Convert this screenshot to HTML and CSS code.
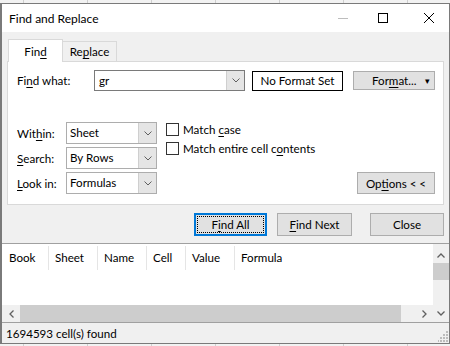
FILE: index.html
```html
<!DOCTYPE html>
<html lang="en">
<head>
  <meta charset="UTF-8" />
  <title>Find and Replace</title>
  <link rel="stylesheet" href="styles.css">
</head>
<body>
  <div class="window">
    <div class="titlebar">
      <span class="title">Find and Replace</span>
      <div class="controls">
        <svg class="ctl-min" width="10" height="10" viewBox="0 0 10 10"><path d="M0 5.5h10" stroke="#bdbdbd" stroke-width="1"/></svg>
        <svg class="ctl-max" width="10" height="10" viewBox="0 0 10 10"><rect x="0.5" y="0.5" width="9" height="9" fill="none" stroke="#000" stroke-width="1"/></svg>
        <svg class="ctl-close" width="10" height="10" viewBox="0 0 10 10"><path d="M0 0L10 10M10 0L0 10" stroke="#000" stroke-width="1"/></svg>
      </div>
    </div>

    <div class="dialog">
      <div class="tabs">
        <div class="tab active">Fin<u>d</u></div>
        <div class="tab">Re<u>p</u>lace</div>
      </div>
      <div class="panel">
        <div class="find-row">
          <span class="find-label">Fi<u>n</u>d what:</span>
          <div class="combo">
            <span class="combo-text">gr</span>
            <span class="combo-arrow"><svg width="8" height="5" viewBox="0 0 8 5"><path d="M0.5 0.5L4 4L7.5 0.5" fill="none" stroke="#606060" stroke-width="1"/></svg></span>
          </div>
          <div class="nofmt">No Format Set</div>
          <div class="btn format-btn"><span>For<u>m</u>at...</span><span class="drop">&#9662;</span></div>
        </div>

        <div class="lower">
          <div class="selects">
            <div class="sel-row">
              <span class="sel-label">Wit<u>h</u>in:</span>
              <div class="select"><span class="select-text">Sheet</span><span class="select-arrow"><svg width="8" height="5" viewBox="0 0 8 5"><path d="M0.5 0.5L4 4L7.5 0.5" fill="none" stroke="#606060" stroke-width="1"/></svg></span></div>
            </div>
            <div class="sel-row">
              <span class="sel-label"><u>S</u>earch:</span>
              <div class="select"><span class="select-text">By Rows</span><span class="select-arrow"><svg width="8" height="5" viewBox="0 0 8 5"><path d="M0.5 0.5L4 4L7.5 0.5" fill="none" stroke="#606060" stroke-width="1"/></svg></span></div>
            </div>
            <div class="sel-row">
              <span class="sel-label"><u>L</u>ook in:</span>
              <div class="select"><span class="select-text">Formulas</span><span class="select-arrow"><svg width="8" height="5" viewBox="0 0 8 5"><path d="M0.5 0.5L4 4L7.5 0.5" fill="none" stroke="#606060" stroke-width="1"/></svg></span></div>
            </div>
          </div>
          <div class="checks">
            <label class="check"><span class="box"></span><span>Match <u>c</u>ase</span></label>
            <label class="check"><span class="box"></span><span>Match entire cell c<u>o</u>ntents</span></label>
          </div>
          <div class="btn options-btn"><span>Op<u>t</u>ions &lt; &lt;</span></div>
        </div>
      </div>

      <div class="actions">
        <div class="btn act focus"><span>F<u>i</u>nd All</span></div>
        <div class="btn act next"><span><u>F</u>ind Next</span></div>
        <div class="btn act close">Close</div>
      </div>
    </div>

    <div class="results">
      <div class="list">
        <div class="list-main">
          <div class="list-head">
            <span class="col c-book">Book</span>
            <span class="col c-sheet">Sheet</span>
            <span class="col c-name">Name</span>
            <span class="col c-cell">Cell</span>
            <span class="col c-value">Value</span>
            <span class="col c-formula">Formula</span>
          </div>
          <div class="list-body"></div>
          <div class="hscroll">
            <span class="sb-btn h-left"><svg width="5" height="8" viewBox="0 0 5 8"><path d="M4.5 0.5L1 4L4.5 7.5" fill="none" stroke="#606060" stroke-width="1.3"/></svg></span>
            <span class="h-thumb"></span>
            <span class="sb-fill"></span>
            <span class="sb-btn h-right"><svg width="5" height="8" viewBox="0 0 5 8"><path d="M0.5 0.5L4 4L0.5 7.5" fill="none" stroke="#606060" stroke-width="1.3"/></svg></span>
          </div>
        </div>
        <div class="vscroll">
          <span class="sb-btn v-up"><svg width="8" height="5" viewBox="0 0 8 5"><path d="M0.5 4.5L4 1L7.5 4.5" fill="none" stroke="#606060" stroke-width="1.3"/></svg></span>
          <span class="v-thumb"></span>
          <span class="sb-fill"></span>
          <span class="sb-btn v-down"><svg width="8" height="5" viewBox="0 0 8 5"><path d="M0.5 0.5L4 4L7.5 0.5" fill="none" stroke="#606060" stroke-width="1.3"/></svg></span>
        </div>
      </div>
      <div class="status">
        <span>1694593 cell(s) found</span>
        <svg class="grip" width="11" height="11" viewBox="0 0 11 11">
          <rect x="8" y="0" width="2" height="2" fill="#bcbcbc"/>
          <rect x="5" y="3" width="2" height="2" fill="#bcbcbc"/>
          <rect x="8" y="3" width="2" height="2" fill="#bcbcbc"/>
          <rect x="2" y="6" width="2" height="2" fill="#bcbcbc"/>
          <rect x="5" y="6" width="2" height="2" fill="#bcbcbc"/>
          <rect x="8" y="6" width="2" height="2" fill="#bcbcbc"/>
          <rect x="-1" y="9" width="2" height="2" fill="#bcbcbc"/>
          <rect x="2" y="9" width="2" height="2" fill="#bcbcbc"/>
          <rect x="5" y="9" width="2" height="2" fill="#bcbcbc"/>
          <rect x="8" y="9" width="2" height="2" fill="#bcbcbc"/>
        </svg>
      </div>
    </div>
  </div>
</body>
</html>
```

FILE: styles.css
```css
* {
  box-sizing: border-box;
}
body {
  margin: 0;
  padding-top: 3px;
  height: 346px;
  overflow: hidden;
  font-family: Lato, "Noto Sans", sans-serif;
  font-size: 11.6px;
  color: #000;
  background: #f2f2f2 repeating-linear-gradient(90deg, transparent 0 23px, #cfcfcf 23px 24px, transparent 24px 64px);
}
u {
  text-decoration-thickness: 1px;
  text-underline-offset: 2px;
}
.window {
  width: 450px;
  height: 341px;
  border: 1px solid #7a7a7a;
  border-left-width: 2px;
  background: #f0f0f0;
  display: flex;
  flex-direction: column;
}

/* title bar */
.titlebar {
  flex: none;
  height: 28px;
  background: #fff;
  display: flex;
  align-items: center;
  padding: 0 15px 0 7px;
}
.title {
  font-size: 12px;
}
.controls {
  margin-left: auto;
  display: flex;
  align-items: center;
}
.controls svg {
  display: block;
}
.ctl-max {
  margin-left: 30px;
}
.ctl-close {
  margin-left: 36px;
}

/* dialog */
.dialog {
  flex: none;
  height: 211px;
  padding: 7px 5px 0 5px;
}
.tabs {
  display: flex;
  align-items: flex-end;
  height: 22px;
  padding-left: 1px;
  position: relative;
  z-index: 1;
}
.tab {
  width: 54px;
  height: 20px;
  border: 1px solid #d9d9d9;
  border-left: none;
  border-bottom: none;
  text-align: center;
  padding-top: 2px;
  line-height: 16px;
}
.tab.active {
  width: 55px;
  height: 23px;
  margin-bottom: -1px;
  border-left: 1px solid #d9d9d9;
  background: #fff;
  padding-top: 4px;
}
.panel {
  height: 144px;
  border: 1px solid #d9d9d9;
  background: #fff;
  padding: 8px 8px 0 9px;
}
.find-row {
  display: flex;
  align-items: center;
  height: 21px;
}
.find-label {
  width: 77px;
}
.combo {
  width: 151px;
  height: 21px;
  border: 1px solid #7a7a7a;
  display: flex;
}
.combo-text {
  flex: 1;
  padding-left: 4px;
  line-height: 19px;
}
.combo-arrow,
.select-arrow {
  width: 18px;
  background: #e5e5e5;
  border-left: 1px solid #cfcfcf;
  display: flex;
  align-items: center;
  justify-content: center;
}
.nofmt {
  margin-left: 7px;
  width: 91px;
  height: 20px;
  border: 1px solid #000;
  text-align: center;
  line-height: 18px;
}
.btn {
  background: #e1e1e1;
  border: 1px solid #adadad;
  display: flex;
  align-items: center;
  justify-content: center;
}
.format-btn {
  margin-left: 10px;
  width: 82px;
  height: 19px;
  justify-content: flex-start;
  padding: 0 4px 0 18px;
}
.format-btn .drop {
  margin-left: auto;
  font-size: 9px;
}
.lower {
  display: flex;
  margin-top: 31px;
}
.selects {
  display: flex;
  flex-direction: column;
  gap: 3px;
}
.sel-row {
  display: flex;
  align-items: center;
  height: 22px;
}
.sel-label {
  width: 49px;
}
.select {
  width: 91px;
  height: 22px;
  border: 1px solid #adadad;
  display: flex;
}
.select-text {
  flex: 1;
  padding-left: 3px;
  line-height: 20px;
}
.checks {
  margin-left: 9px;
  padding-top: 1px;
  display: flex;
  flex-direction: column;
  gap: 6px;
}
.check {
  display: flex;
  align-items: center;
  gap: 4px;
  height: 13px;
}
.box {
  width: 13px;
  height: 13px;
  border: 1px solid #333;
  background: #fff;
}
.options-btn {
  margin-left: auto;
  align-self: flex-end;
  width: 78px;
  height: 22px;
}
.actions {
  display: flex;
  justify-content: flex-end;
  margin-top: 8px;
}
.act {
  height: 23px;
}
.act.focus {
  width: 73px;
  border-color: #0078d7;
  box-shadow: inset 0 0 0 1px #0078d7;
  position: relative;
}
.act.focus::after {
  content: "";
  position: absolute;
  inset: 2px;
  border: 1px dotted #000;
}
.act.next {
  width: 75px;
  margin-left: 10px;
}
.act.close {
  width: 74px;
  margin-left: 18px;
}

/* results */
.results {
  flex: 1;
  border-top: 1px solid #a0a0a0;
  display: flex;
  flex-direction: column;
}
.list {
  height: 79px;
  display: flex;
  background: #fff;
  border-bottom: 1px solid #a0a0a0;
}
.list-main {
  flex: 1;
  display: flex;
  flex-direction: column;
}
.list-head {
  display: flex;
  height: 27px;
  padding-top: 2px;
}
.col {
  height: 24px;
  line-height: 24px;
  padding-left: 6px;
  border-right: 1px solid #e5e5e5;
}
.c-book { width: 47px; padding-left: 7px; }
.c-sheet { width: 49px; }
.c-name { width: 49px; }
.c-cell { width: 39px; }
.c-value { width: 49px; }
.c-formula { border-right: none; }
.list-body {
  flex: 1;
}
.hscroll {
  height: 17px;
  display: flex;
  background: #f0f0f0;
}
.sb-btn {
  display: flex;
  align-items: center;
  justify-content: center;
}
.sb-fill {
  flex: 1;
}
.h-left {
  width: 18px;
}
.h-right {
  width: 17px;
}
.h-thumb {
  width: 381px;
  background: #cdcdcd;
}
.vscroll {
  width: 16px;
  display: flex;
  flex-direction: column;
  background: #f0f0f0;
}
.v-up {
  height: 19px;
  padding-top: 3px;
}
.v-thumb {
  height: 17px;
  background: #cdcdcd;
}
.v-down {
  height: 18px;
}
.status {
  height: 20px;
  display: flex;
  align-items: center;
  padding-left: 4px;
}
.grip {
  margin-left: auto;
  align-self: flex-end;
  margin-bottom: 1px;
}
```
